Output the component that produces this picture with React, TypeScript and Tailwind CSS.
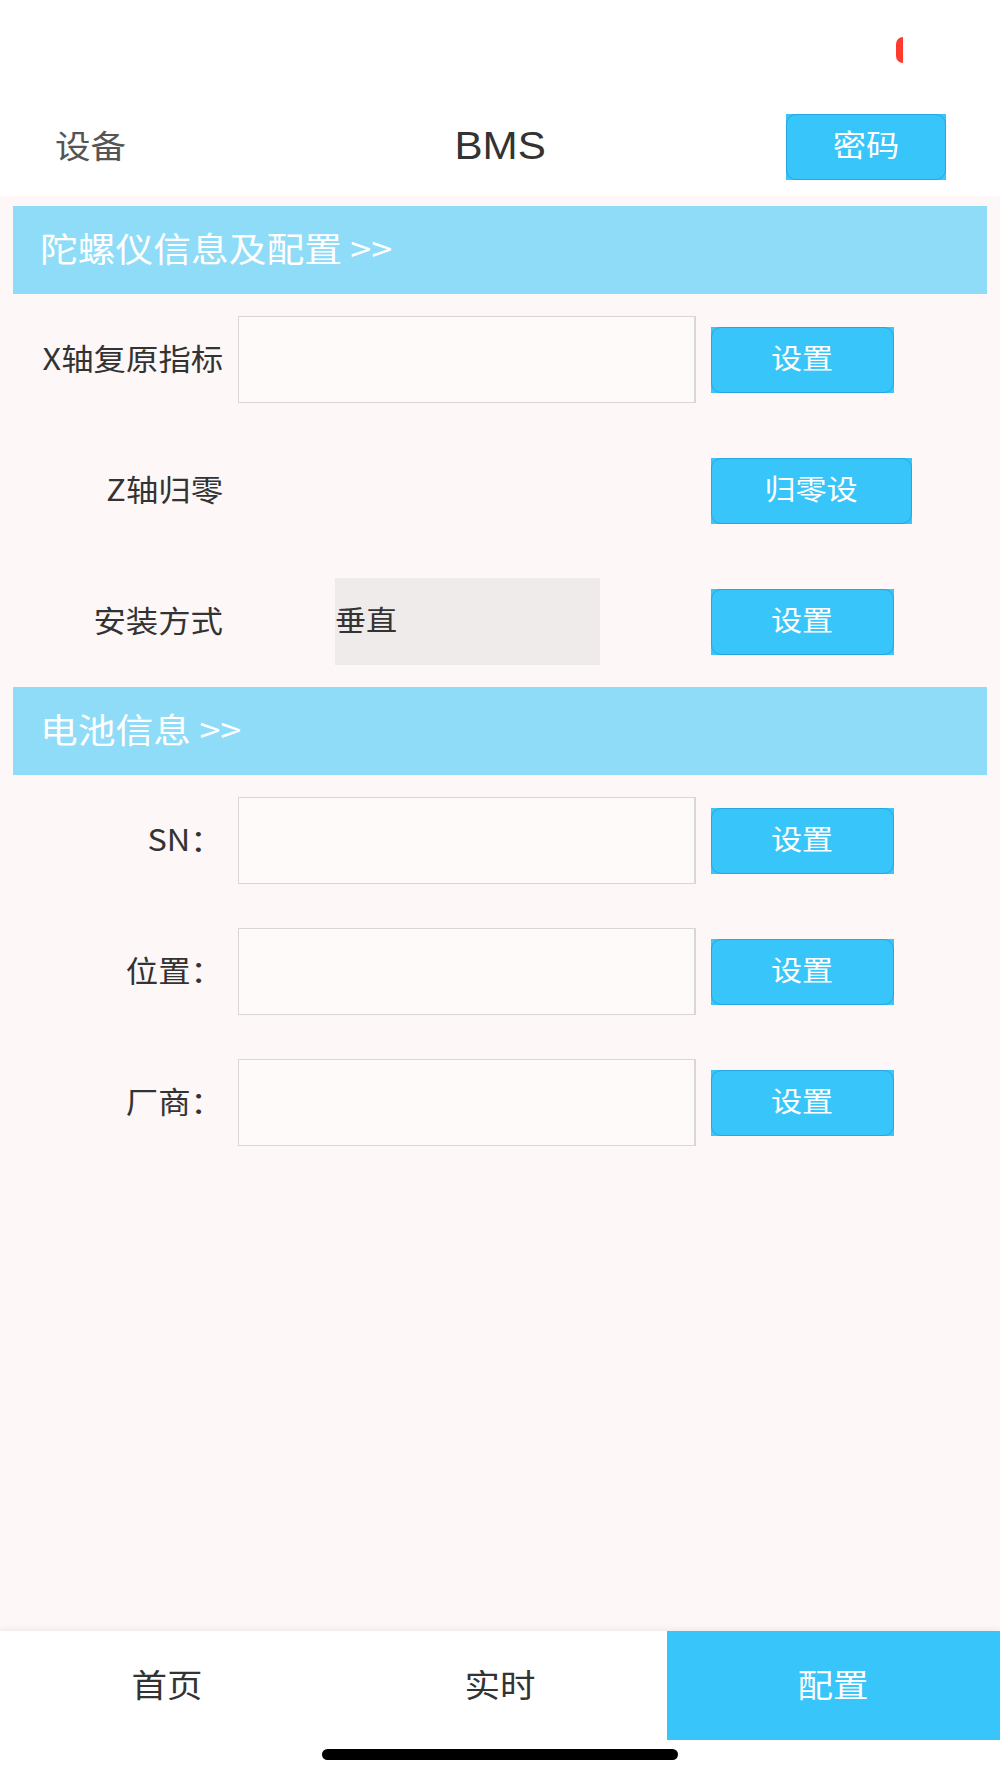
import React from 'react';

const cjk = "font-['Noto_Sans_CJK_SC','Noto_Sans',sans-serif]";

// the screenshot's glyphs are a bit wider than tall, so text gets a small horizontal stretch
const Txt: React.FC<{ children: React.ReactNode; origin?: string; narrow?: boolean; shift?: boolean }> = ({
  children,
  origin = 'origin-center',
  narrow,
  shift = true,
}) => (
  <span
    className={`inline-block whitespace-pre ${origin} ${narrow ? 'scale-x-[1.08]' : 'scale-x-[1.11]'} ${shift ? '-translate-y-[3px]' : ''}`}
  >
    {children}
  </span>
);

const SetButton: React.FC<{ label: string; wide?: boolean }> = ({ label, wide }) => (
  <button
    type="button"
    className={`ml-[15px] h-[66px] shrink-0 bg-[#38c5fa] text-[28px] text-white ${wide ? 'w-[201px]' : 'w-[183px]'}`}
  >
    <span className="flex h-full w-full items-center justify-center rounded-[10px] border border-[#27a6de]">
      <Txt>{label}</Txt>
    </span>
  </button>
);

const SectionBand: React.FC<{ title: string }> = ({ title }) => (
  <div className="flex h-[88px] items-center bg-[#8fdcf8] pl-[27px] text-[34px] text-white">
    <Txt origin="origin-left">{title}</Txt>
  </div>
);

const Label: React.FC<{ text: string }> = ({ text }) => (
  <div className="w-[210px] shrink-0 text-right text-[30px] leading-none text-[#333]">
    <Txt origin="origin-right" narrow>
      {text}
    </Txt>
  </div>
);

const InputRow: React.FC<{ label: string }> = ({ label }) => (
  <div className="flex h-[131px] items-center">
    <Label text={label} />
    <div className="ml-[15px] h-[87px] w-[458px] shrink-0 border border-r-2 border-[#d8d6d6] bg-[#fefafa]" />
    <SetButton label="设置" />
  </div>
);

export default function App() {
  return (
    <div className={`flex h-[1778px] w-[1000px] flex-col bg-[#fdf7f7] ${cjk}`}>
      {/* status bar */}
      <div className="flex h-[100px] justify-end bg-white pr-[97px] pt-[37px]">
        <div className="h-[26px] w-[7px] rounded-l-full bg-[#ff3b30]" />
      </div>

      {/* nav */}
      <div className="flex h-[96px] items-center bg-white pb-[3px]">
        <div className="flex-1 pl-[55px] text-[32px] text-[#555]">
          <Txt origin="origin-left">设备</Txt>
        </div>
        <div className="font-['Liberation_Sans',Arial,sans-serif] text-[38px] text-[#333]">
          <Txt shift={false}>BMS</Txt>
        </div>
        <div className="flex flex-1 justify-end pr-[54px]">
          <button type="button" className="h-[66px] w-[160px] bg-[#38c5fa] text-[30px] text-white">
            <span className="flex h-full w-full items-center justify-center rounded-[10px] border border-[#27a6de]">
              <Txt>密码</Txt>
            </span>
          </button>
        </div>
      </div>

      {/* content */}
      <div className="flex-1 px-[13px] pt-[10px]">
        <SectionBand title="陀螺仪信息及配置 >>" />
        <InputRow label="X轴复原指标" />
        <div className="flex h-[131px] items-center">
          <Label text="Z轴归零" />
          <div className="ml-[15px] w-[458px] shrink-0" />
          <SetButton label="归零设" wide />
        </div>
        <div className="flex h-[131px] items-center">
          <Label text="安装方式" />
          <div className="ml-[15px] flex w-[458px] shrink-0 justify-center">
            <div className="flex h-[87px] w-[265px] items-center bg-[#efebeb] text-[28px] text-[#333]">
              <Txt origin="origin-left">垂直</Txt>
            </div>
          </div>
          <SetButton label="设置" />
        </div>

        <SectionBand title="电池信息 >>" />
        <InputRow label="SN：" />
        <InputRow label="位置：" />
        <InputRow label="厂商：" />
      </div>

      {/* tab bar */}
      <div className="grid h-[109px] grid-cols-3 bg-white text-[32px] shadow-[0_-2px_6px_rgba(0,0,0,0.06)]">
        <div className="flex items-center justify-center text-[#333]">
          <Txt>首页</Txt>
        </div>
        <div className="flex items-center justify-center text-[#333]">
          <Txt>实时</Txt>
        </div>
        <div className="flex items-center justify-center bg-[#38c5fa] text-white">
          <Txt>配置</Txt>
        </div>
      </div>
      <div className="flex h-[38px] justify-center bg-white pt-[9px]">
        <div className="h-[11px] w-[356px] rounded-full bg-black" />
      </div>
    </div>
  );
}
